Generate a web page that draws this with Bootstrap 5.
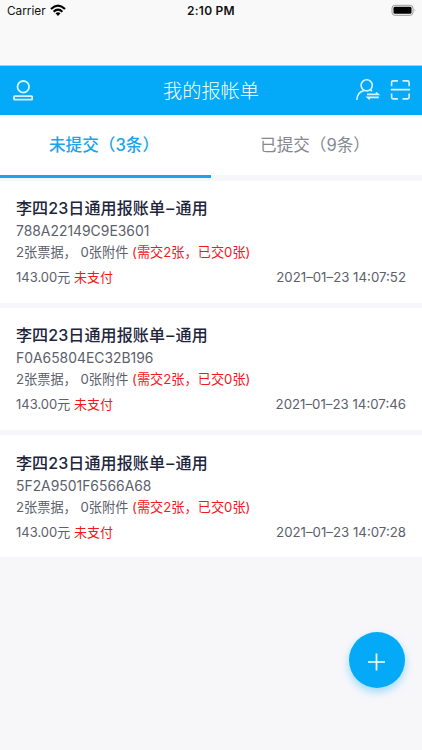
<!DOCTYPE html>
<html lang="zh-CN">
<head>
<meta charset="utf-8">
<meta name="viewport" content="width=device-width, initial-scale=1">
<title>我的报帐单</title>
<link href="https://cdn.jsdelivr.net/npm/bootstrap@5.3.0/dist/css/bootstrap.min.css" rel="stylesheet">
<style>
  body { font-family: Inter, "Noto Sans CJK SC", sans-serif; background: #f7f7fa; height: 750px; overflow: hidden; color: #5c606b; }
  .status-area { height: 66px; background: #f9f9f9; color: #111; font-size: 11.8px; line-height: 22px; border-bottom: 1px solid #a9cfe2; padding-left: 7px; }
  .clock { left: 187px; top: 0; font-weight: 600; font-size: 12px; letter-spacing: .25px; white-space: nowrap; }
  .title-bar { height: 49px; background: #04a9f7; color: #fff; }
  .title-bar h1 { font-size: 19.2px; font-weight: 300; line-height: 49px; padding-top: 1px; }
  .title-bar svg, .status-area svg { display: block; }
  .side { width: 80px; }
  .tabs { height: 65.6px; background: #f7f7fa; }
  .tabs .tab { height: 60px; background: #fff; border: 0; border-radius: 0; font-size: 16.6px; line-height: 60px; color: #858892; white-space: nowrap; padding: 0 3px 0 0; }
  .tabs .tab.active { height: 63px; color: #1ba3ec; font-weight: 500; border-bottom: 3px solid #1ba3ec; }
  .bills { gap: 5.3px; }
  .bill { height: 122px; padding: 15.4px 16px 0; }
  .bill h2 { font-size: 16px; line-height: 24px; font-weight: 500; color: #20243a; white-space: nowrap; letter-spacing: .12px; }
  .dash { margin: 0 1.2px; }
  .code { font-size: 13.9px; line-height: 22px; }
  .count { font-size: 13.2px; line-height: 20px; white-space: nowrap; }
  .summary { font-size: 13px; line-height: 20px; margin-top: 5px; }
  .summary time { font-size: 13.25px; }
  .alert-text { color: #f6161b; }
  .add { right: 17px; bottom: 62px; width: 56.5px; height: 56.5px; background: #04a9f7; border: 0; box-shadow: 0 4px 9px rgba(4,169,247,.38); }
  .add svg { margin-top: 3px; }
</style>
<script src="https://cdn.jsdelivr.net/npm/bootstrap@5.3.0/dist/js/bootstrap.bundle.min.js"></script>
</head>
<body>
<header>
  <div class="status-area position-relative d-flex justify-content-between align-items-start">
    <div class="d-flex"><span>Carrier</span>
      <svg class="ms-1 mt-1" width="16" height="13" viewBox="0 0 16 13" fill="none" stroke="#000" stroke-width="2.2"><path d="M1 5Q8-1.6 15 5M3.6 7.7Q8 3.6 12.4 7.7"/><path d="M5.5 9.3Q8 7.2 10.5 9.3L8 12Z" fill="#000" stroke="none"/></svg>
    </div>
    <span class="clock position-absolute">2:10 PM</span>
    <svg class="me-1" width="27" height="21" viewBox="0 0 27 21"><rect x="1" y="5.3" width="21" height="10" rx="2.8" fill="none" stroke="#999"/><rect x="2.5" y="6.8" width="18" height="7" rx="1.4"/><path d="M23.7 8.6q1.2 1.7 0 3.4z" fill="#888"/></svg>
  </div>
  <nav class="title-bar d-flex align-items-center justify-content-between">
    <div class="side"><svg width="40" height="49" viewBox="0 0 40 49" fill="none" stroke="#d5f4ff" stroke-width="1.8"><circle cx="23.3" cy="20.8" r="5.8"/><rect x="14" y="30.2" width="18.2" height="3.5" rx=".6"/></svg></div>
    <h1 class="m-0">我的报帐单</h1>
    <div class="side"><svg width="80" height="49" viewBox="0 0 80 49" fill="none" stroke="#d5f4ff" stroke-width="1.6"><circle cx="24.7" cy="19.3" r="5.6"/><path d="M14.8 34q.4-7.8 7.2-9.5M28.3 23.7l1.6 1.4M25 28.4h11.2l-2.2-1.9M36.8 31.4H25.6l2.2 1.9"/><path d="M49.6 20.2v-3.7q0-1.6 1.6-1.6h4.7M60.5 14.9h5q1.6 0 1.6 1.6v3.7M49.6 27.6v3.7q0 1.6 1.6 1.6h4.7M60.5 32.9h5q1.6 0 1.6-1.6v-3.7M48.8 23.6h19.2"/></svg></div>
  </nav>
</header>
<div class="tabs row g-0 align-items-start">
  <button class="tab active col-6">未提交（3条）</button>
  <button class="tab col-6">已提交（9条）</button>
</div>
<main class="bills d-flex flex-column">
  <article class="bill bg-white">
    <h2 class="m-0">李四23日通用报账单<span class="dash">–</span>通用</h2>
    <div class="code">788A22149C9E3601</div>
    <div class="count">2张票据， 0张附件 <span class="alert-text">(需交2张，已交0张)</span></div>
    <div class="summary d-flex justify-content-between"><span>143.00元 <span class="alert-text">未支付</span></span><time>2021–01–23 14:07:52</time></div>
  </article>
  <article class="bill bg-white">
    <h2 class="m-0">李四23日通用报账单<span class="dash">–</span>通用</h2>
    <div class="code">F0A65804EC32B196</div>
    <div class="count">2张票据， 0张附件 <span class="alert-text">(需交2张，已交0张)</span></div>
    <div class="summary d-flex justify-content-between"><span>143.00元 <span class="alert-text">未支付</span></span><time>2021–01–23 14:07:46</time></div>
  </article>
  <article class="bill bg-white">
    <h2 class="m-0">李四23日通用报账单<span class="dash">–</span>通用</h2>
    <div class="code">5F2A9501F6566A68</div>
    <div class="count">2张票据， 0张附件 <span class="alert-text">(需交2张，已交0张)</span></div>
    <div class="summary d-flex justify-content-between"><span>143.00元 <span class="alert-text">未支付</span></span><time>2021–01–23 14:07:28</time></div>
  </article>
</main>
<button class="add position-fixed rounded-circle d-flex align-items-center justify-content-center p-0" aria-label="新增">
  <svg width="19" height="19" viewBox="0 0 19 19" fill="none" stroke="#fff" stroke-width="1.7"><path d="M9.5 1.5v17M1 10h17"/></svg>
</button>
</body>
</html>
